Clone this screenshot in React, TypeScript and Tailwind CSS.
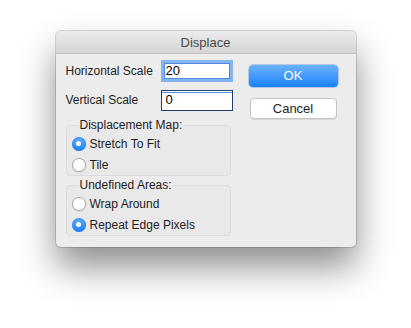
import React from "react";

const font = { fontFamily: '"Liberation Sans", Arial, sans-serif' };

function Radio({ label, checked }: { label: string; checked?: boolean }) {
    return (
        <div className="flex h-[21px] items-center gap-[4px] pl-[5px]">
            {checked ? (
                <span className="flex h-[14px] w-[14px] items-center justify-center rounded-full bg-gradient-to-b from-[#5aacfb] to-[#1b82fb] shadow-[inset_0_0_0_1px_rgba(20,100,220,0.35)]">
                    <span className="h-[5px] w-[5px] rounded-full bg-white" />
                </span>
            ) : (
                <span className="h-[14px] w-[14px] rounded-full border border-[#a9a9a9] bg-white shadow-[0_0.5px_1px_rgba(0,0,0,0.15)]" />
            )}
            <span className="text-[12px] leading-[14px] text-[#1e1e1e]">{label}</span>
        </div>
    );
}

function Group({ title, children, className }: { title: string; children: React.ReactNode; className?: string }) {
    return (
        <fieldset className={"w-[165px] rounded-[4px] border border-[#dcdcdc] bg-[#e9e9e9] " + (className ?? "")}>
            <legend className="ml-[11px] px-[2px] text-[12px] leading-[14px] text-[#1e1e1e]">{title}</legend>
            <div className="pt-[1px]">{children}</div>
        </fieldset>
    );
}

export default function App() {
    return (
        <div className="h-[328px] w-[411px] bg-white pt-[31px]" style={font}>
            <div className="mx-auto w-[300px] overflow-hidden rounded-[5px] bg-[#ececec] shadow-[0_0_0_1px_rgba(0,0,0,0.14),0_20px_36px_rgba(0,0,0,0.45)]">
                {/* title bar */}
                <div className="flex h-[23px] items-center justify-center border-b border-[#c2c2c2] bg-gradient-to-b from-[#ebebeb] to-[#d5d5d5] pt-[1px] text-[13px] text-[#4a4a4a]">
                    Displace
                </div>

                <div className="flex pb-[11px] pl-[10px] pt-[6px]">
                    {/* left column */}
                    <div className="flex w-[167px] flex-col">
                        <div className="flex h-[22px] items-center justify-between">
                            <span className="text-[12px] text-[#1e1e1e]">Horizontal Scale</span>
                            <div className="flex h-[22px] w-[72px] items-center border-[3px] border-[#84b4ef] bg-white pl-[2px] text-[13px] text-black shadow-[inset_0_0_0_1px_#4b8ce3]">
                                20
                            </div>
                        </div>
                        <div className="mt-[7px] flex h-[22px] items-center justify-between">
                            <span className="text-[12px] text-[#1e1e1e]">Vertical Scale</span>
                            <div className="flex h-[21px] w-[72px] items-center border border-[#233f68] bg-white pl-[4px] text-[13px] text-black shadow-[inset_0_1px_0_#ffffff,inset_0_2px_0_#4a93e6]">
                                0
                            </div>
                        </div>

                        <Group title="Displacement Map:" className="mt-[7px]">
                            <Radio label="Stretch To Fit" checked />
                            <Radio label="Tile" />
                        </Group>

                        <Group title="Undefined Areas:" className="mt-[2px]">
                            <Radio label="Wrap Around" />
                            <Radio label="Repeat Edge Pixels" checked />
                        </Group>
                    </div>

                    {/* buttons */}
                    <div className="ml-[16px] flex flex-col gap-[11px] pt-[5px]">
                        <button className="h-[22px] w-[89px] rounded-[4px] bg-gradient-to-b from-[#69b2fb] to-[#1482fb] text-[13px] text-white shadow-[0_0_0_0.5px_rgba(20,90,200,0.5)]">
                            OK
                        </button>
                        <button className="ml-[1px] h-[21px] w-[87px] rounded-[4px] border border-[#c4c4c4] bg-white text-[13px] text-[#1e1e1e] shadow-[0_1px_0_rgba(0,0,0,0.08)]">
                            Cancel
                        </button>
                    </div>
                </div>
            </div>
        </div>
    );
}
